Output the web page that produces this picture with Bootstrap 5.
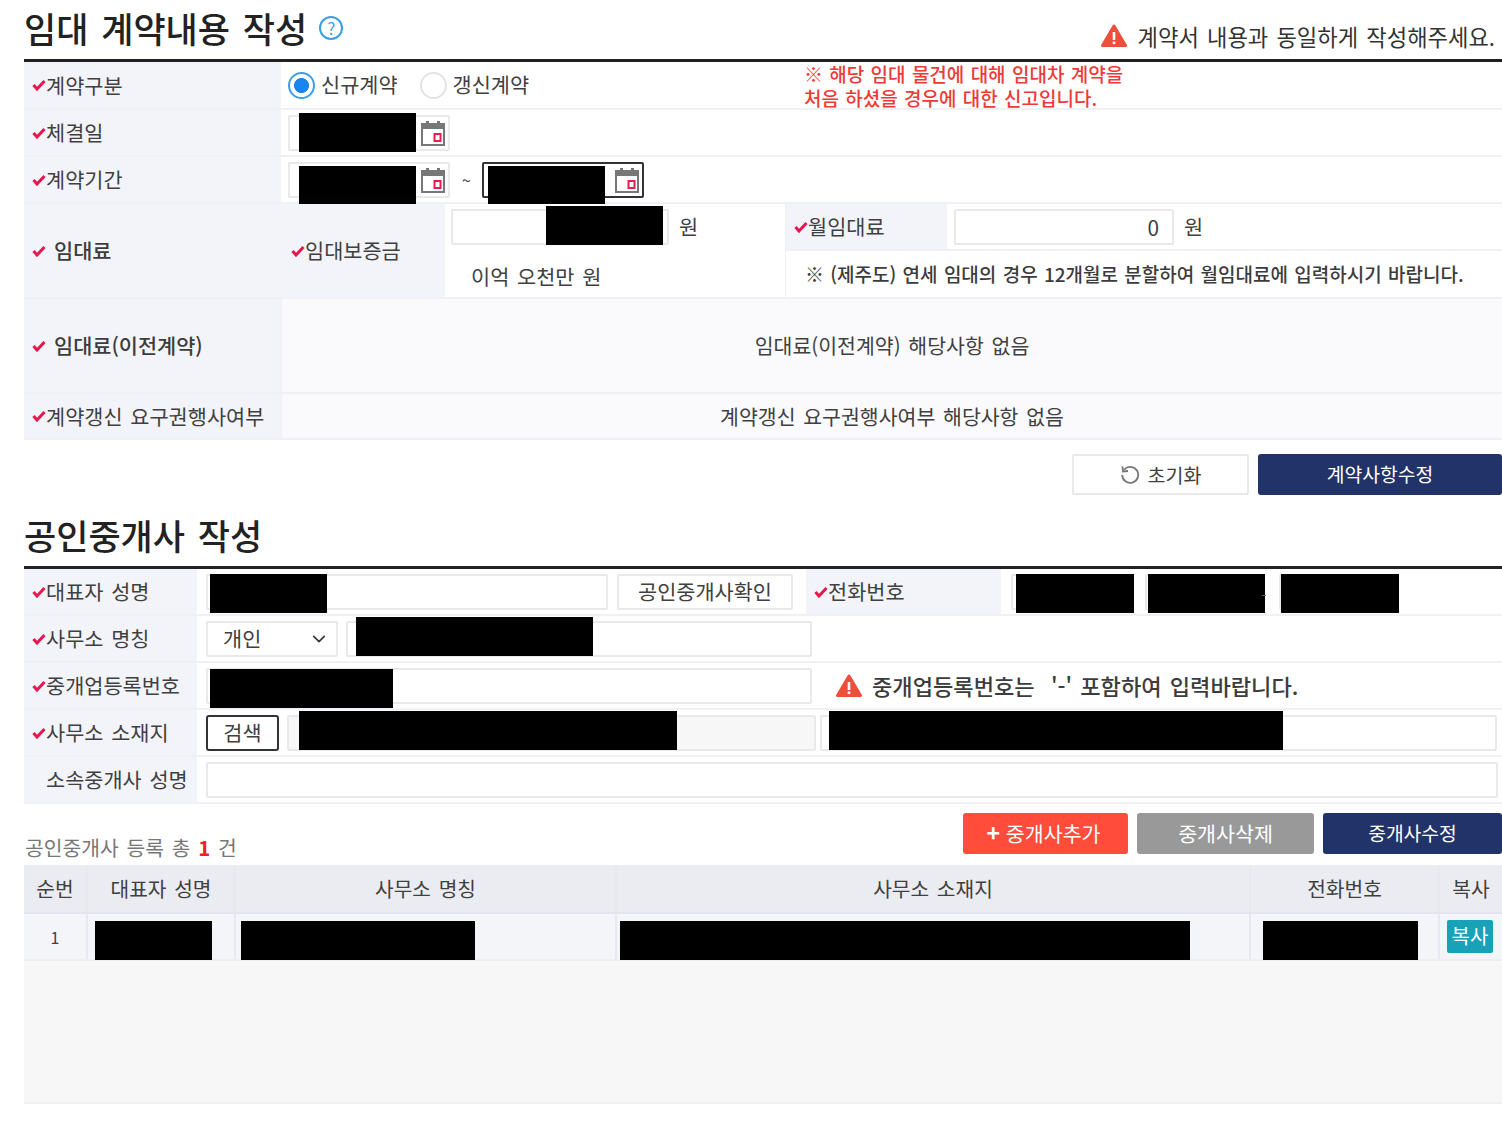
<!DOCTYPE html>
<html lang="ko">
<head>
    <title>임대 계약내용 작성</title>
    <meta charset="utf-8">
    <meta name="viewport" content="width=device-width, initial-scale=1">
    <link href="https://cdn.jsdelivr.net/npm/bootstrap@5.3.0/dist/css/bootstrap.min.css" rel="stylesheet">
    <script src="https://cdn.jsdelivr.net/npm/bootstrap@5.3.0/dist/js/bootstrap.bundle.min.js"></script>
    <style>
        body { font-family: "Noto Sans CJK KR", "Liberation Sans", sans-serif; font-size: 20.8px; color: #404040; background: #fff; word-spacing: 2px; }
        .page-wrap { padding-left: 24px; height: 1125px; overflow: hidden; }
        .title-bar { height: 59px; border-bottom: 3px solid #222; box-sizing: content-box; }
        .title-text { font-size: 35px; font-weight: 500; color: #222; line-height: 1; margin: 0; padding-top: 10px; word-spacing: 3px; }
        .help-mark { width: 24px; height: 24px; border: 2px solid #3a9fdf; border-radius: 50%; color: #3a9fdf; font-size: 17px; line-height: 20px; text-align: center; margin: 16px 0 0 12px; word-spacing: 0; }
        .title-note { font-size: 22.2px; color: #333; margin: 12px 7px 0 auto; line-height: 34px; }
        .note-icon { flex: none; margin-right: 11px; }
        .form-line { border-bottom: 2px solid #f0f1f5; height: 47px; }
        .line-first { height: 48px; }
        .line-tall { height: 95px; }
        .line-last { height: 46px; }
        .head-cell { background: #f3f4f9; flex: none; padding-left: 8px; display: flex; align-items: center; line-height: 1; }
        .head-wide { width: 257px; }
        .head-mid { width: 164px; padding-left: 10px; }
        .head-phone { width: 195px; margin-left: 13px; }
        .head-small { width: 173px; }
        .head-month { width: 161px; }
        .head-strong { font-weight: 500; color: #3c3c3c; }
        .head-strong svg { margin-right: 8px; }
        .head-plain { padding-left: 22px; }
        .tick { flex: none; margin-right: 0; }
        .value-cell { padding-left: 7px; display: flex; align-items: center; min-width: 0; }
        .value-flat { background: #fafafc; flex: 1; justify-content: center; padding: 0; border-left: 1px solid #eef0f4; font-size: 20.5px; }
        .field { position: relative; flex: none; }
        .field-date { width: 162px; }
        .field-rent { width: 218px; }
        .field-month { width: 220px; }
        .field-name { width: 402px; margin-left: 9px; }
        .field-office { width: 466px; margin-left: 8px; }
        .field-regno { width: 606px; margin-left: 9px; }
        .field-addr1 { width: 529px; margin-left: 8px; }
        .field-addr2 { width: 677px; margin-left: 4px; }
        .field-sub { width: 1292px; margin-left: 9px; }
        .field-phone { width: 118px; }
        .phone-group { margin-left: 10px; gap: 16px; }
        .phone-dash { position: absolute; left: 117px; top: 21px; width: 4px; height: 1px; background: #666; }
        .field-input.form-control, .field-select.form-select { height: 36px; border: 2px solid #e9e9e9; border-radius: 2px; padding: 0 10px; font-size: 20.8px; color: #404040; background-color: #fff; }
        .field-select.form-select { width: 132px; flex: none; margin-left: 9px; padding-left: 15px; background-size: 18px 14px; background-position: right 8px center; }
        .field-input.form-control:disabled { background: #f7f7f7; }
        .field-focus.form-control { border-color: #333; }
        .month-input.form-control { text-align: right; padding-right: 13px; }
        .cal-icon { position: absolute; right: 4px; top: 4px; }
        .hide-box { position: absolute; background: #000; height: 39px; }
        .hb-d1 { left: 11px; top: -2px; width: 117px; }
        .hb-d2 { left: 11px; top: 4px; width: 117px; height: 38px; }
        .hb-d3 { left: 6px; top: 4px; width: 117px; height: 38px; }
        .hb-rent { left: 95px; top: -3px; width: 117px; }
        .hb-name { left: 4px; top: 0; width: 117px; }
        .hb-ph1 { left: 5px; top: 0; width: 118px; }
        .hb-ph2 { left: 3px; top: 0; width: 117px; }
        .hb-ph3 { left: 2px; top: 0; width: 118px; }
        .hb-office { left: 10px; top: -4px; width: 237px; }
        .hb-regno { left: 4px; top: 1px; width: 183px; }
        .hb-addr1 { left: 12px; top: -4px; width: 378px; }
        .hb-addr2 { left: 9px; top: -4px; width: 454px; }
        .hb-t1 { left: 7px; top: 7px; width: 117px; }
        .hb-t2 { left: 5px; top: 7px; width: 234px; }
        .hb-t3 { left: 3px; top: 7px; width: 570px; }
        .hb-t4 { left: 12px; top: 7px; width: 155px; }
        .radio-mark.form-check-input { width: 27px; height: 27px; margin: 0; border: 2px solid #e3e3e3; flex: none; float: none; }
        .radio-mark.form-check-input:checked { border-color: #3a9fe8; background: radial-gradient(circle, #1a84f0 0 44%, #fff 48%); }
        .radio-text { margin: 0 22px 0 6px; }
        .red-note { color: #ee3a36; font-size: 19px; font-weight: 500; line-height: 24px; position: absolute; left: 804px; top: 62px; word-spacing: 1px; }
        .unit-text { margin-left: 10px; }
        .tilde-mark { font-size: 16px; margin: 0 11px 0 12px; }
        .rent-col { width: 340px; flex: none; }
        .rent-top { height: 46px; padding-left: 6px; }
        .rent-bottom { padding: 6px 0 0 26px; height: 47px; }
        .month-col { border-left: 1px solid #eef0f4; }
        .month-top { height: 47px; border-bottom: 2px solid #f0f1f5; }
        .month-note { font-size: 19px; font-weight: 500; color: #3c3c3c; padding-left: 19px; height: 46px; word-spacing: 1px; }
        .pale-btn.btn { background: #fff; border: 2px solid #e9e9e9; border-radius: 2px; color: #404040; font-size: 19.5px; height: 41px; padding: 0; }
        .navy-btn.btn { background: #223369; border: 0; border-radius: 3px; color: #fff; font-size: 19.3px; height: 41px; padding: 0; }
        .gray-btn.btn { background: #999; border: 0; border-radius: 3px; color: #fff; font-size: 20.6px; height: 41px; padding: 0; }
        .red-btn.btn { background: #ff4c3b; border: 0; border-radius: 3px; color: #fff; font-size: 20.6px; height: 41px; padding: 0 4px 0 0; }
        .plus-mark { font-size: 23px; line-height: 1; }
        .action-row { padding-top: 14px; height: 71px; gap: 9px; }
        .w-reset { width: 177px; }
        .w-save { width: 244px; }
        .w-add { width: 165px; }
        .w-del { width: 177px; }
        .w-edit { width: 179px; }
        .title-two { height: 55px; }
        .title-two .title-text { padding-top: 6px; }
        .check-btn.btn { width: 176px; height: 36px; margin-left: 9px; flex: none; font-size: 20.8px; }
        .search-btn.btn { width: 73px; height: 36px; margin-left: 9px; flex: none; border: 2px solid #333; border-radius: 3px; background: #fff; color: #404040; font-size: 20.8px; padding: 0; line-height: 1; }
        .warn-text { font-weight: 500; font-size: 22.1px; color: #3c3c3c; margin-left: 10px; }
        .list-head { height: 61px; }
        .count-text { color: #777; font-size: 20.4px; margin: 25px 0 0 1px; line-height: 36px; }
        .count-num { color: #ee2222; font-weight: 700; }
        .list-actions { padding-top: 9px; gap: 9px; margin-left: auto; }
        .list-table.table { table-layout: fixed; width: 1478px; margin: 0; --bs-table-bg: transparent; font-size: 20.3px; color: #404040; }
        .list-table th, .list-table td { padding: 0; height: 47px; text-align: center; vertical-align: middle; border: 0; border-right: 2px solid #e8e9f0; font-weight: 400; }
        .list-table th { background: #ebecf2; border-bottom: 2px solid #e3e4ec; height: 48px; }
        .list-table td { background: #f4f5f9; border-bottom: 2px solid #eceef3; position: relative; }
        .list-table th:last-child, .list-table td:last-child { border-right: 0; }
        .row-no { font-size: 16px; font-weight: 500; }
        .copy-btn.btn { width: 46px; height: 33px; background: #17a2b8; border: 0; border-radius: 2px; color: #fff; font-size: 20px; padding: 0; line-height: 1; position: relative; top: -1px; left: -1px; word-spacing: 0; }
        .list-empty { height: 143px; background: #f7f7f7; border-bottom: 2px solid #efefef; }
        .c-no { width: 63px; }
        .c-rep { width: 148px; }
        .c-office { width: 381px; }
        .c-addr { width: 634px; }
        .c-tel { width: 189px; }
        .c-copy { width: 63px; }
    </style>
</head>
<body>
<svg width="0" height="0" class="d-block">
    <defs>
        <symbol id="tickIcon" viewBox="0 0 14 12"><path d="M1.5 6 5 10 12.5 2" fill="none" stroke="#e5174f" stroke-width="3"/></symbol>
        <symbol id="warnIcon" viewBox="0 0 26 24"><path d="M13 2 24.5 21.5H1.5Z" fill="#ee4f3a" stroke="#ee4f3a" stroke-width="3" stroke-linejoin="round"/><rect x="11.7" y="8" width="2.6" height="8" fill="#fff"/><rect x="11.7" y="17.5" width="2.6" height="2.6" fill="#fff"/></symbol>
        <symbol id="calIcon" viewBox="0 0 26 28"><rect x="2" y="5" width="22" height="21" fill="#fff" stroke="#777" stroke-width="2"/><rect x="2" y="5" width="22" height="5" fill="#777"/><rect x="6" y="2" width="3" height="6" fill="#777"/><rect x="17" y="2" width="3" height="6" fill="#777"/><rect x="14.5" y="15" width="6" height="7" fill="#fff" stroke="#ee1c4e" stroke-width="2"/></symbol>
    </defs>
</svg>
<div class="page-wrap position-relative">
    <!-- 임대 계약내용 -->
    <div class="title-bar d-flex">
        <h2 class="title-text">임대 계약내용 작성</h2>
        <span class="help-mark">?</span>
        <div class="title-note d-flex align-items-center">
            <svg width="26" height="24" class="note-icon"><use href="#warnIcon"/></svg>
            계약서 내용과 동일하게 작성해주세요.
        </div>
    </div>
    <div class="form-line line-first d-flex">
        <div class="head-cell head-wide"><svg class="tick" width="14" height="12"><use href="#tickIcon"/></svg>계약구분</div>
        <div class="value-cell">
            <input class="radio-mark form-check-input" type="radio" name="contractType" checked>
            <span class="radio-text">신규계약</span>
            <input class="radio-mark form-check-input" type="radio" name="contractType">
            <span class="radio-text">갱신계약</span>
        </div>
    </div>
    <div class="red-note">※ 해당 임대 물건에 대해 임대차 계약을<br>처음 하셨을 경우에 대한 신고입니다.</div>
    <div class="form-line d-flex">
        <div class="head-cell head-wide"><svg class="tick" width="14" height="12"><use href="#tickIcon"/></svg>체결일</div>
        <div class="value-cell">
            <div class="field field-date">
                <input class="field-input form-control" type="text">
                <svg class="cal-icon" width="26" height="28"><use href="#calIcon"/></svg>
                <span class="hide-box hb-d1"></span>
            </div>
        </div>
    </div>
    <div class="form-line d-flex">
        <div class="head-cell head-wide"><svg class="tick" width="14" height="12"><use href="#tickIcon"/></svg>계약기간</div>
        <div class="value-cell">
            <div class="field field-date">
                <input class="field-input form-control" type="text">
                <svg class="cal-icon" width="26" height="28"><use href="#calIcon"/></svg>
                <span class="hide-box hb-d2"></span>
            </div>
            <span class="tilde-mark">~</span>
            <div class="field field-date">
                <input class="field-input field-focus form-control" type="text">
                <svg class="cal-icon" width="26" height="28"><use href="#calIcon"/></svg>
                <span class="hide-box hb-d3"></span>
            </div>
        </div>
    </div>
    <div class="form-line line-tall d-flex">
        <div class="head-cell head-wide head-strong"><svg class="tick" width="14" height="12"><use href="#tickIcon"/></svg>임대료</div>
        <div class="head-cell head-mid"><svg class="tick" width="14" height="12"><use href="#tickIcon"/></svg>임대보증금</div>
        <div class="rent-col d-flex flex-column">
            <div class="rent-top d-flex align-items-center">
                <div class="field field-rent">
                    <input class="field-input form-control" type="text">
                    <span class="hide-box hb-rent"></span>
                </div>
                <span class="unit-text">원</span>
            </div>
            <div class="rent-bottom d-flex align-items-center">이억 오천만 원</div>
        </div>
        <div class="month-col flex-grow-1 d-flex flex-column">
            <div class="month-top d-flex">
                <div class="head-cell head-month">
                    <svg class="tick" width="14" height="12"><use href="#tickIcon"/></svg>월임대료
                </div>
                <div class="value-cell">
                    <div class="field field-month">
                        <input class="field-input month-input form-control" type="text" value="0">
                    </div>
                    <span class="unit-text">원</span>
                </div>
            </div>
            <div class="month-note d-flex align-items-center">※ (제주도) 연세 임대의 경우 12개월로 분할하여 월임대료에 입력하시기 바랍니다.</div>
        </div>
    </div>
    <div class="form-line line-tall d-flex">
        <div class="head-cell head-wide head-strong"><svg class="tick" width="14" height="12"><use href="#tickIcon"/></svg>임대료(이전계약)</div>
        <div class="value-cell value-flat">임대료(이전계약) 해당사항 없음</div>
    </div>
    <div class="form-line line-last d-flex">
        <div class="head-cell head-wide"><svg class="tick" width="14" height="12"><use href="#tickIcon"/></svg>계약갱신 요구권행사여부</div>
        <div class="value-cell value-flat">계약갱신 요구권행사여부 해당사항 없음</div>
    </div>
    <div class="action-row d-flex justify-content-end">
        <button class="pale-btn btn w-reset d-flex align-items-center justify-content-center gap-2" type="button">
            <svg width="20" height="20" viewBox="0 0 20 20"><path d="M4.2 4.6A8 8 0 1 1 2.2 10" fill="none" stroke="#777" stroke-width="1.8"/><path d="M2.5 1.5 3 6.5 8 6" fill="none" stroke="#777" stroke-width="1.8"/></svg>
            초기화
        </button>
        <button class="navy-btn btn w-save" type="button">계약사항수정</button>
    </div>

    <!-- 공인중개사 -->
    <div class="title-bar title-two d-flex">
        <h2 class="title-text">공인중개사 작성</h2>
    </div>
    <div class="form-line d-flex">
        <div class="head-cell head-small"><svg class="tick" width="14" height="12"><use href="#tickIcon"/></svg>대표자 성명</div>
        <div class="d-flex align-items-center flex-grow-1">
            <div class="field field-name">
                <input class="field-input form-control" type="text">
                <span class="hide-box hb-name"></span>
            </div>
            <button class="pale-btn btn check-btn" type="button">공인중개사확인</button>
            <div class="head-cell head-phone align-self-stretch"><svg class="tick" width="14" height="12"><use href="#tickIcon"/></svg>전화번호</div>
            <div class="phone-group d-flex align-items-center">
                <div class="field field-phone"><input class="field-input form-control" type="text"><span class="hide-box hb-ph1"></span></div>
                <div class="field field-phone"><input class="field-input form-control" type="text"><span class="hide-box hb-ph2"></span><span class="phone-dash"></span></div>
                <div class="field field-phone"><input class="field-input form-control" type="text"><span class="hide-box hb-ph3"></span></div>
            </div>
        </div>
    </div>
    <div class="form-line d-flex">
        <div class="head-cell head-small"><svg class="tick" width="14" height="12"><use href="#tickIcon"/></svg>사무소 명칭</div>
        <div class="d-flex align-items-center">
            <select class="field-select form-select"><option>개인</option></select>
            <div class="field field-office">
                <input class="field-input form-control" type="text">
                <span class="hide-box hb-office"></span>
            </div>
        </div>
    </div>
    <div class="form-line d-flex">
        <div class="head-cell head-small"><svg class="tick" width="14" height="12"><use href="#tickIcon"/></svg>중개업등록번호</div>
        <div class="d-flex align-items-center">
            <div class="field field-regno">
                <input class="field-input form-control" type="text">
                <span class="hide-box hb-regno"></span>
            </div>
            <svg class="ms-4" width="26" height="24"><use href="#warnIcon"/></svg>
            <span class="warn-text">중개업등록번호는 &nbsp;'-' 포함하여 입력바랍니다.</span>
        </div>
    </div>
    <div class="form-line d-flex">
        <div class="head-cell head-small"><svg class="tick" width="14" height="12"><use href="#tickIcon"/></svg>사무소 소재지</div>
        <div class="d-flex align-items-center">
            <button class="search-btn btn" type="button">검색</button>
            <div class="field field-addr1">
                <input class="field-input form-control" type="text" disabled>
                <span class="hide-box hb-addr1"></span>
            </div>
            <div class="field field-addr2">
                <input class="field-input form-control" type="text">
                <span class="hide-box hb-addr2"></span>
            </div>
        </div>
    </div>
    <div class="form-line d-flex">
        <div class="head-cell head-small head-plain">소속중개사 성명</div>
        <div class="d-flex align-items-center">
            <div class="field field-sub"><input class="field-input form-control" type="text"></div>
        </div>
    </div>
    <div class="list-head d-flex">
        <div class="count-text">공인중개사 등록 총 <span class="count-num">1</span> 건</div>
        <div class="list-actions d-flex">
            <button class="red-btn btn w-add" type="button"><b class="plus-mark">+</b> 중개사추가</button>
            <button class="gray-btn btn w-del" type="button">중개사삭제</button>
            <button class="navy-btn btn w-edit" type="button">중개사수정</button>
        </div>
    </div>
    <table class="list-table table">
        <thead>
        <tr>
            <th class="c-no">순번</th>
            <th class="c-rep">대표자 성명</th>
            <th class="c-office">사무소 명칭</th>
            <th class="c-addr">사무소 소재지</th>
            <th class="c-tel">전화번호</th>
            <th class="c-copy">복사</th>
        </tr>
        </thead>
        <tbody>
        <tr>
            <td class="row-no">1</td>
            <td><span class="hide-box hb-t1"></span></td>
            <td><span class="hide-box hb-t2"></span></td>
            <td><span class="hide-box hb-t3"></span></td>
            <td><span class="hide-box hb-t4"></span></td>
            <td><button class="copy-btn btn" type="button">복사</button></td>
        </tr>
        </tbody>
    </table>
    <div class="list-empty"></div>
</div>
</body>
</html>
